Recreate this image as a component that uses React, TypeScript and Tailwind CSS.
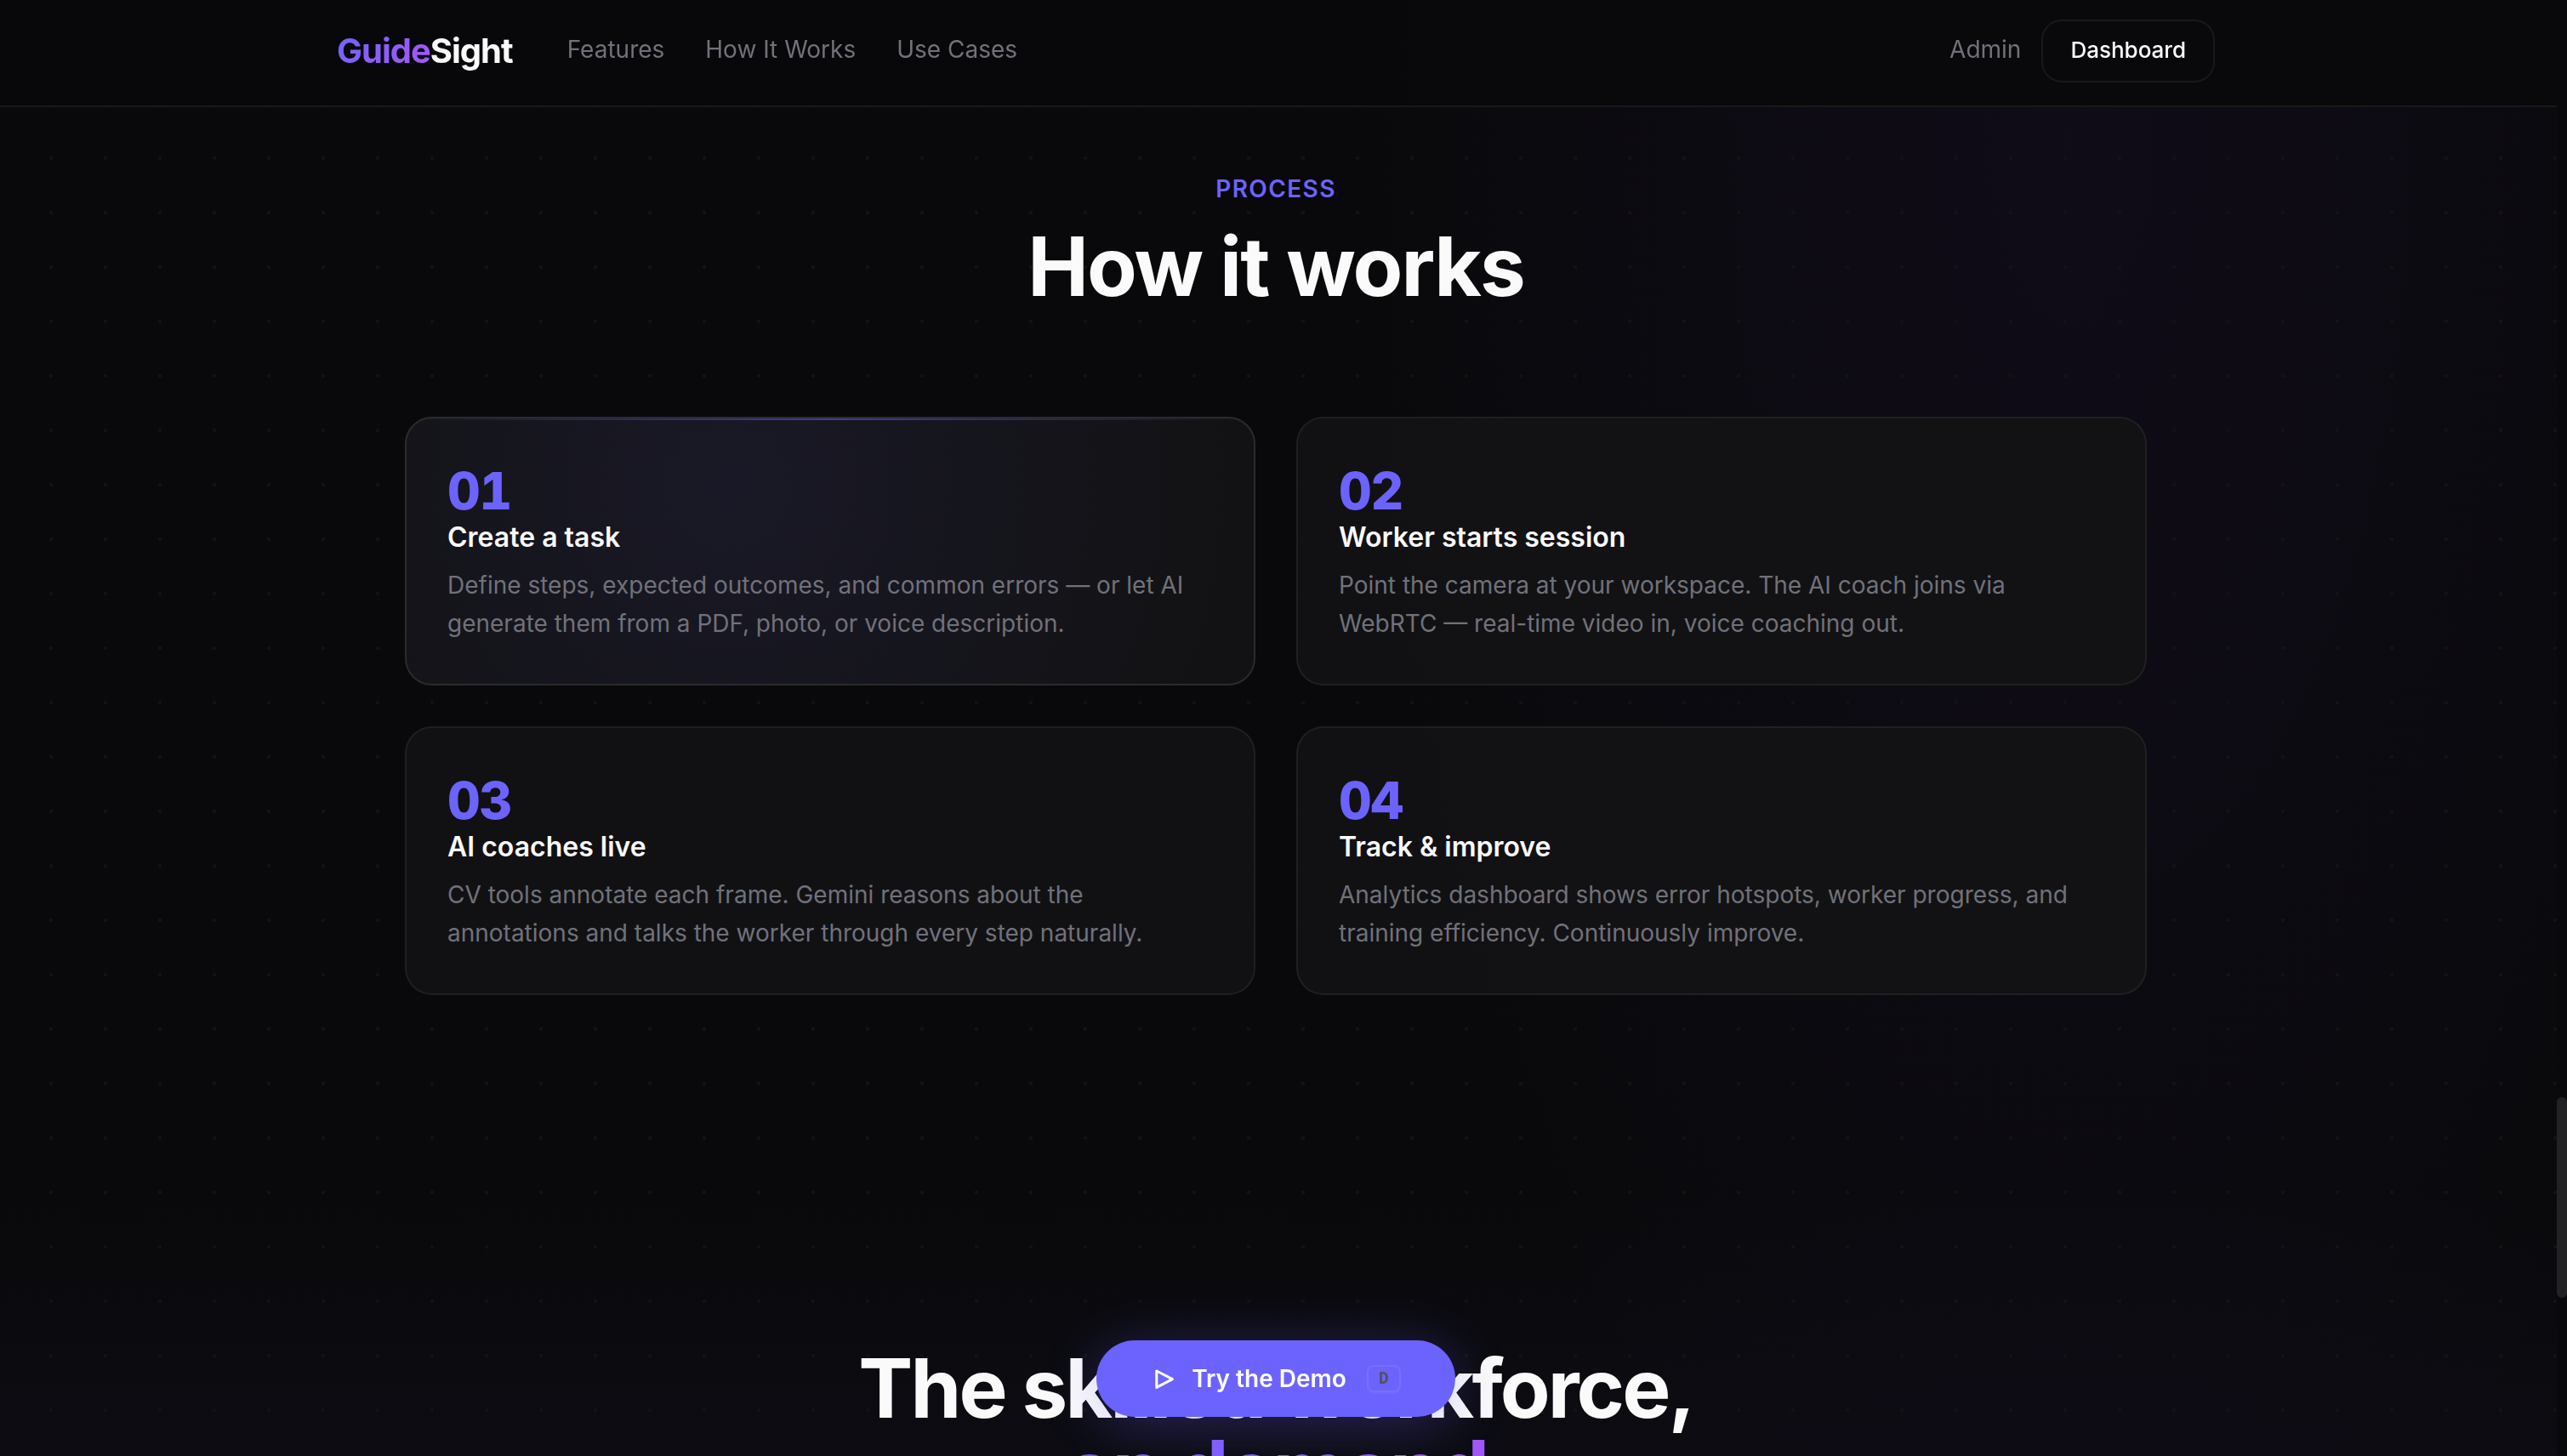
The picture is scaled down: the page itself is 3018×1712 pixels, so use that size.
const steps = [
  {
    number: '01',
    title: 'Create a task',
    text: 'Define steps, expected outcomes, and common errors — or let AI generate them from a PDF, photo, or voice description.',
    active: true,
  },
  {
    number: '02',
    title: 'Worker starts session',
    text: 'Point the camera at your workspace. The AI coach joins via WebRTC — real-time video in, voice coaching out.',
    active: false,
  },
  {
    number: '03',
    title: 'AI coaches live',
    text: 'CV tools annotate each frame. Gemini reasons about the annotations and talks the worker through every step naturally.',
    active: false,
  },
  {
    number: '04',
    title: 'Track & improve',
    text: 'Analytics dashboard shows error hotspots, worker progress, and training efficiency. Continuously improve.',
    active: false,
  },
];

const navLinks = ['Features', 'How It Works', 'Use Cases'];

function Header() {
  return (
    <header className="sticky top-0 z-40 border-b-2 border-[#19191b] bg-[#09090b]/90 pr-[6px] pb-1">
      <div className="mx-auto flex h-30 max-w-[2208px] items-center justify-between">
        <div className="flex items-center gap-16">
          <a href="#" className="text-[40px] leading-12 font-bold tracking-tight text-[#fafafa]">
            <span className="bg-linear-135 from-[#6c63ff] to-[#a855f7] bg-clip-text text-transparent">Guide</span>Sight
          </a>
          <nav className="flex gap-12 pb-1 text-[28px] leading-11 text-[#71717a]">
            {navLinks.map((label) => (
              <a key={label} href="#">
                {label}
              </a>
            ))}
          </nav>
        </div>
        <div className="flex items-center gap-6">
          <a href="#" className="pb-1 text-[28px] leading-11 text-[#71717a]">
            Admin
          </a>
          <button className="h-[74px] rounded-3xl border-2 border-[#19191b] px-8 pb-0.5 text-[26px] leading-10 font-medium text-[#fafafa]">
            Dashboard
          </button>
        </div>
      </div>
    </header>
  );
}

function StepCard({ number, title, text, active }: (typeof steps)[number]) {
  return (
    <article
      className={`relative overflow-hidden rounded-[32px] border-2 p-12 ${
        active
          ? 'border-[#2b2b2d] bg-[#121214] bg-[radial-gradient(circle_at_38%_25%,#6c63ff14,transparent_600px)]'
          : 'border-white/6 bg-[#131315]/90'
      }`}
    >
      {active && (
        <div className="absolute inset-x-0 top-0 h-[2px] bg-linear-to-r from-transparent via-[#6c63ff]/50 to-transparent" />
      )}
      <div className="text-[60px] leading-[74px] font-extrabold tracking-[-0.02em] text-[#6c63ff] tabular-nums">{number}</div>
      <h3 className="mb-4 text-[32px] leading-9 font-semibold text-[#fafafa]">{title}</h3>
      <p className="text-[28px] leading-[45px] text-[#71717a]">{text}</p>
    </article>
  );
}

function DemoButton() {
  return (
    <div className="fixed inset-x-0 bottom-[46px] z-50 flex justify-center pr-[18px]">
      <button className="flex h-[90px] items-center rounded-full bg-[#6c63ff] px-16 text-[28px] font-semibold text-white shadow-[0_8px_64px_#6c63ff4d]">
        <svg viewBox="0 0 32 32" className="mr-4 size-8" fill="none" stroke="currentColor" strokeWidth="3" strokeLinejoin="round">
          <path d="M6.8 7v19.4L25.4 16.7z" />
        </svg>
        Try the Demo
        <kbd className="ml-6 flex h-8 w-10 items-center justify-center rounded-lg border-2 border-white/8 pb-0.5 font-['DejaVu_Sans_Mono',monospace] text-[20px] leading-5 font-bold text-[#52525b] shadow-[0_2px_0_#ffffff0a]">
          D
        </kbd>
      </button>
    </div>
  );
}

export default function App() {
  return (
    <div className="relative h-screen overflow-hidden bg-[#09090b] font-[Inter,sans-serif]">
      <div className="mr-3 h-full bg-[radial-gradient(circle_at_60px_58px,#131315_2px,transparent_2.5px),radial-gradient(ellipse_850px_1900px_at_81%_10%,#7c3aed0f,transparent),linear-gradient(to_top,#6c63ff08,transparent_320px)] bg-[size:64px_64px,100%_100%,100%_100%]">
        <Header />
        <main className="pr-[6px]">
          <section className="mx-auto max-w-[2048px] pt-[74px] pb-[414px]">
            <p className="text-center text-[28px] leading-11 font-semibold tracking-[0.05em] text-[#6c63ff] uppercase">Process</p>
            <h2 className="mt-4 mb-31 text-center text-[96px] leading-[106px] font-bold tracking-[-0.02em] text-[#fafafa]">
              How it works
            </h2>
            <div className="grid grid-cols-2 gap-12">
              {steps.map((step) => (
                <StepCard key={step.number} {...step} />
              ))}
            </div>
          </section>
          <section>
            <h2 className="text-center text-[96px] leading-[96px] font-bold tracking-[-0.03em] text-[#fafafa]">
              The skilled workforce,
              <br />
              <span className="bg-linear-135 from-[#6c63ff] to-[#a855f7] bg-clip-text text-transparent">on demand</span>
            </h2>
          </section>
        </main>
      </div>
      <DemoButton />
      <div className="absolute top-[1290px] right-0 h-[236px] w-3 rounded-full bg-[#222224]" />
    </div>
  );
}
